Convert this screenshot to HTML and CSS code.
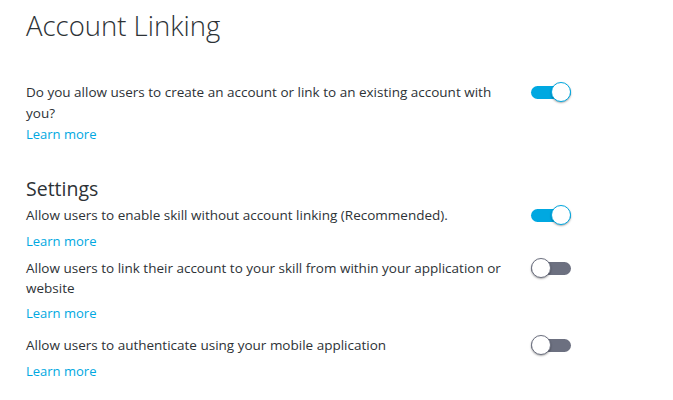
FILE: index.html
```html
<!DOCTYPE html>
<html>
<head>
<meta charset="utf-8">
<link rel="stylesheet" href="styles.css">
</head>
<body>
<main class="page">
  <h1 class="title">Account Linking</h1>
  <section class="row first">
    <div class="text">
      <p class="desc">Do you allow users to create an account or link to an existing account with you?</p>
      <a class="link" href="#">Learn more</a>
    </div>
    <span class="toggle on"><span class="knob"></span></span>
  </section>
  <h2 class="subtitle">Settings</h2>
  <section class="row setting s1">
    <div class="text">
      <p class="desc">Allow users to enable skill without account linking (Recommended).</p>
      <a class="link" href="#">Learn more</a>
    </div>
    <span class="toggle on"><span class="knob"></span></span>
  </section>
  <section class="row setting s2">
    <div class="text">
      <p class="desc">Allow users to link their account to your skill from within your application or website</p>
      <a class="link" href="#">Learn more</a>
    </div>
    <span class="toggle off"><span class="knob"></span></span>
  </section>
  <section class="row setting s3">
    <div class="text">
      <p class="desc">Allow users to authenticate using your mobile application</p>
      <a class="link" href="#">Learn more</a>
    </div>
    <span class="toggle off"><span class="knob"></span></span>
  </section>
</main>
</body>
</html>
```

FILE: styles.css
```css
html, body {
  margin: 0;
  padding: 0;
  background: #ffffff;
}
body {
  font-family: "Open Sans", "Noto Sans", sans-serif;
  color: #2d3236;
}
.page {
  padding: 10px 0 0 26px;
}
.title {
  margin: 0;
  font-size: 27.5px;
  font-weight: 300;
  line-height: 32px;
  color: #2d3236;
}
.row {
  display: flex;
  align-items: flex-start;
}
.first {
  margin-top: 40px;
}
.text {
  width: 490px;
  display: flex;
  flex-direction: column;
  align-items: flex-start;
}
.desc {
  margin: 0;
  font-size: 13.5px;
  line-height: 21px;
  color: #2d3236;
}
.s2 .desc {
  line-height: 20px;
}
.link {
  font-size: 13px;
  line-height: 21px;
  color: #00a8e1;
  text-decoration: none;
}
.setting .link {
  margin-top: 5px;
}
.subtitle {
  margin: 32px 0 0;
  font-size: 19.5px;
  font-weight: 400;
  line-height: 24px;
  color: #2d3236;
}
.s1 {
  margin-top: 4px;
  margin-bottom: 6px;
}
.s2 {
  margin-bottom: 11px;
}
.toggle {
  position: relative;
  width: 40px;
  height: 13px;
  border-radius: 7px;
  margin-top: 4px;
  margin-left: 15px;
  flex-shrink: 0;
}
.toggle.on { background: #00a8e1; }
.toggle.off { background: #6c7080; }
.knob {
  position: absolute;
  top: -4px;
  width: 20px;
  height: 20px;
  box-sizing: border-box;
  border-radius: 50%;
  background: #ffffff;
  box-shadow: 0 1px 2px rgba(0,0,0,0.35);
}
.on .knob {
  right: 0;
  border: 1.5px solid #00a8e1;
}
.off .knob {
  left: 0;
  border: 1.5px solid #6c7080;
}
```
